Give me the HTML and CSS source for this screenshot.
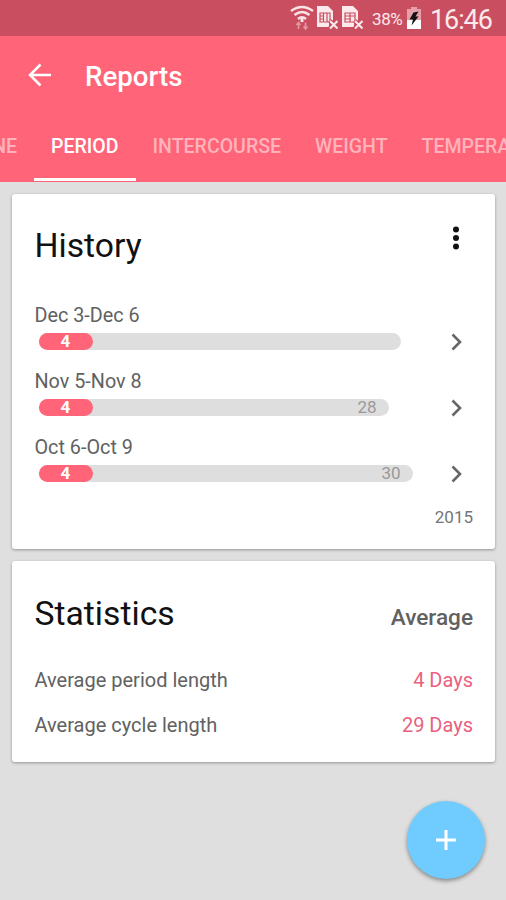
FILE: index.html
```html
<!DOCTYPE html>
<html lang="en">
<head>
<meta charset="utf-8">
<title>Reports</title>
<link rel="stylesheet" href="styles.css">
</head>
<body>
<div class="status">
  <svg class="wifi" width="24" height="26" viewBox="0 0 24 26" fill="none" stroke="#fbe3e6" stroke-width="2.4">
    <path d="M1 7Q12-1 23 7M4.500 11Q12 5 19.500 11M8 15Q12 11.500 16 15"/>
    <path d="M12 14v4" stroke-width="3"/>
    <path d="M8.500 25v-6M6.500 21l2-2.500 2 2.500M15.500 18.500v6M13.500 22.500l2 2.500 2-2.500" stroke="#e398a2" stroke-width="1.600"/>
  </svg>
  <svg class="sim" width="23" height="25" viewBox="0 0 23 25">
    <path d="M1 1h11l5 5v9l-4 3v4H1z" fill="#fbe9eb"/>
    <path d="M4 8h10v9H4zM7.500 8v9M11 8v9M4 11h3M4 14h3" fill="none" stroke="#c94e60" stroke-width="1.200"/>
    <path d="M13.500 15.500l8 8M21.500 15.500l-8 8" stroke="#c94e60" stroke-width="4"/>
    <path d="M14 16l7.500 7.500M21.500 16L14 23.500" stroke="#fbe9eb" stroke-width="2"/>
  </svg>
  <svg class="sim second" width="23" height="25" viewBox="0 0 23 25">
    <path d="M1 1h11l5 5v9l-4 3v4H1z" fill="#fbe9eb"/>
    <path d="M4 8h10v9H4zM4 11h10M4 14h6M9 8v9" fill="none" stroke="#c94e60" stroke-width="1.200"/>
    <path d="M13.500 15.500l8 8M21.500 15.500l-8 8" stroke="#c94e60" stroke-width="4"/>
    <path d="M14 16l7.500 7.500M21.500 16L14 23.500" stroke="#fbe9eb" stroke-width="2"/>
  </svg>
  <span class="percent">38%</span>
  <svg class="battery" width="14" height="22" viewBox="0 0 14 22">
    <path d="M4 0h6v2h4v11H0V2h4z" fill="#e6a0aa"/>
    <path d="M0 13h14v9H0z" fill="#fff"/>
    <path d="M6.500 5.500l5-1-3 5h3L4.500 18.500l1.500-6H2.500z" fill="#151012"/>
  </svg>
  <span class="clock">16:46</span>
</div>
<header class="header">
  <div class="toolbar">
    <svg class="back" width="24" height="24" viewBox="0 0 24 24" fill="none" stroke="#fff" stroke-width="2.500"><path d="M12.500 1.500L2 12l10.500 10.500M2 12h21"/></svg>
    <h1>Reports</h1>
  </div>
  <nav class="tabs">
    <span class="tab">TIMELINE</span>
    <span class="tab active">PERIOD</span>
    <span class="tab">INTERCOURSE</span>
    <span class="tab">WEIGHT</span>
    <span class="tab">TEMPERATURE</span>
  </nav>
</header>
<main class="content">
  <section class="card history">
    <div class="card-head">
      <h2>History</h2>
      <svg class="more" width="8" height="24" viewBox="0 0 8 24"><circle cx="4" cy="3.500" r="3"/><circle cx="4" cy="12" r="3"/><circle cx="4" cy="20.500" r="3"/></svg>
    </div>
    <div class="cycle">
      <div class="range">Dec 3-Dec 6</div>
      <div class="line"><div class="bar" style="width:362px"><b>4</b></div><svg class="chev" width="11" height="18" viewBox="0 0 11 18"><path d="M1.500 1.500L9 9l-7.500 7.500"/></svg></div>
    </div>
    <div class="cycle">
      <div class="range">Nov 5-Nov 8</div>
      <div class="line"><div class="bar" style="width:350px"><b>4</b><span>28</span></div><svg class="chev" width="11" height="18" viewBox="0 0 11 18"><path d="M1.500 1.500L9 9l-7.500 7.500"/></svg></div>
    </div>
    <div class="cycle">
      <div class="range">Oct 6-Oct 9</div>
      <div class="line"><div class="bar" style="width:374px"><b>4</b><span>30</span></div><svg class="chev" width="11" height="18" viewBox="0 0 11 18"><path d="M1.500 1.500L9 9l-7.500 7.500"/></svg></div>
    </div>
    <div class="year">2015</div>
  </section>
  <section class="card stats">
    <div class="stats-head"><h2>Statistics</h2><span class="avg">Average</span></div>
    <div class="stat"><span>Average period length</span><span class="value">4 Days</span></div>
    <div class="stat"><span>Average cycle length</span><span class="value">29 Days</span></div>
  </section>
</main>
<button class="fab" aria-label="Add"><svg width="20" height="20" viewBox="0 0 20 20" stroke="#fff" stroke-width="3"><path d="M10 0v20M0 10h20"/></svg></button>
</body>
</html>
```
FILE: styles.css
```css
* { box-sizing: border-box; }
body {
  margin: 0;
  height: 900px;
  overflow: hidden;
  background: #dfdfdf;
  font-family: Roboto, "Liberation Sans", sans-serif;
  color: #616161;
}
h1, h2 { margin: 0; font-weight: 400; }
svg { display: block; flex: none; }
.status {
  height: 36px;
  display: flex;
  align-items: flex-start;
  padding-left: 290px;
  background: #c94e60;
  color: #fbe9eb;
}
.wifi { margin-top: 4px; }
.sim { margin: 5px 0 0 2px; }
.second { margin-left: 2px; }
.percent { margin: 9px 0 0 8px; width: 32px; font-size: 17px; line-height: 20px; letter-spacing: -0.4px; }
.battery { margin: 7px 0 0 3px; }
.clock { margin: 4px 0 0 9px; font-size: 27px; line-height: 32px; letter-spacing: -1.1px; }
.header {
  position: relative;
  height: 146px;
  background: #ff6478;
  color: #fff;
  overflow: hidden;
}
.toolbar { height: 79px; display: flex; align-items: center; padding-left: 28px; }
.back { margin-top: -2px; }
.toolbar h1 { margin: 3px 0 0 33px; font-size: 27.7px; line-height: 32px; font-weight: 500; }
.tabs { display: flex; height: 66px; margin-left: -86.5px; }
.tab {
  flex: none;
  padding: 20px 17px 0;
  font-size: 19.55px;
  line-height: 24px;
  font-weight: 500;
  color: #ffb3bc;
}
.active { color: #fff; border-bottom: 3px solid #fff; }
.content { display: flex; flex-direction: column; gap: 12px; padding: 12px 11px 0 12px; }
.card { background: #fff; border-radius: 3px; box-shadow: 0 1px 3px rgba(0,0,0,.35); padding: 0 22px 0 22.5px; }
.history { height: 355px; }
.card h2 { font-size: 33.7px; line-height: 40px; color: #111; }
.card-head { height: 107px; padding-top: 32px; display: flex; justify-content: space-between; }
.more { margin: 0 13px 0 0; fill: #111; }
.cycle { height: 66px; padding-top: 3px; }
.range { font-size: 19.8px; line-height: 24px; }
.line { display: flex; justify-content: space-between; align-items: center; height: 27px; margin-left: 4px; }
.bar {
  display: flex;
  justify-content: space-between;
  height: 17px;
  border-radius: 9px;
  background: #dedede;
  font-size: 17px;
  line-height: 17px;
  color: #999;
}
.bar b { width: 54px; border-radius: 9px; background: #ff6478; color: #fff; text-align: center; font-weight: 700; }
.bar span { margin-right: 12px; }
.chev { margin-right: 11px; fill: none; stroke: #666; stroke-width: 2.6; }
.year { margin-top: 7px; text-align: right; font-size: 17px; line-height: 22px; color: #757575; }
.stats { height: 201px; }
.stats-head { height: 97px; padding-top: 33px; display: flex; justify-content: space-between; }
.avg { margin-top: 10px; font-size: 22.6px; line-height: 28px; font-weight: 500; }
.stat { height: 45px; display: flex; justify-content: space-between; font-size: 20px; line-height: 45px; }
.value { color: #e9617d; }
.fab {
  position: absolute;
  left: 407px;
  top: 801px;
  width: 78px;
  height: 78px;
  border: 0;
  border-radius: 50%;
  background: #70ccff;
  box-shadow: 0 2px 4px rgba(0,0,0,.4);
  display: flex;
  align-items: center;
  justify-content: center;
}
```
